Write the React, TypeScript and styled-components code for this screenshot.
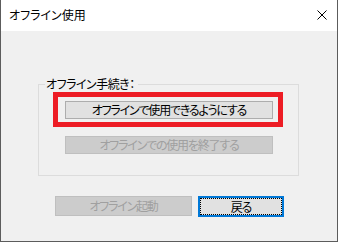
import React from 'react';
import styled, { createGlobalStyle } from 'styled-components';

const GlobalStyle = createGlobalStyle`
  html, body {
    margin: 0;
    padding: 0;
    background: #f0f0f0;
  }
  body {
    font-family: "Noto Sans CJK JP", "Noto Sans", sans-serif;
    font-size: 12px;
    font-feature-settings: "palt";
  }
`;

const Window = styled.div`
  width: 338px;
  height: 242px;
  box-sizing: border-box;
  display: flex;
  flex-direction: column;
  background: #f0f0f0;
  border: 1px solid #5c5c5c;
  border-top: none;
`;

const TitleBar = styled.div`
  height: 31px;
  flex: none;
  display: flex;
  align-items: center;
  justify-content: space-between;
  padding: 0 10px 0 8px;
  background: #ffffff;
  color: #000000;
  font-size: 12px;
  line-height: 14px;
`;

const Title = styled.span`
  margin-top: -2px;
`;

const CloseIcon = styled.svg`
  display: block;
  margin-top: -2px;
`;

const Body = styled.div`
  display: flex;
  flex-direction: column;
  align-items: flex-start;
`;

const GroupBox = styled.div`
  margin: 53px 0 0 37px;
  width: 261px;
  height: 92px;
  box-sizing: border-box;
  border: 1px solid #dcdcdc;
  display: flex;
  flex-direction: column;
  align-items: flex-start;
`;

const Legend = styled.span`
  margin: -8px 0 0 6px;
  padding: 0 3px 0 1px;
  height: 14px;
  line-height: 14px;
  letter-spacing: -0.5px;
  background: #f0f0f0;
  color: #000000;
`;

const Marked = styled.div`
  position: relative;
  margin: 10px 0 0 26px;
`;

const RedMark = styled.div`
  position: absolute;
  left: -12px;
  top: -9px;
  width: 230px;
  height: 35px;
  box-sizing: border-box;
  border: 5px solid #ed1c24;
  pointer-events: none;
`;

const Button = styled.button<{ $w: number; $h?: number; $disabled?: boolean }>`
  width: ${({ $w }) => $w}px;
  height: ${({ $h = 18 }) => $h}px;
  box-sizing: border-box;
  margin: 0;
  padding: 0;
  display: flex;
  align-items: center;
  justify-content: center;
  font-family: inherit;
  font-size: 12px;
  line-height: 14px;
  letter-spacing: -1.2px;
  font-feature-settings: "palt";
  background: ${({ $disabled }) => ($disabled ? '#cccccc' : '#e1e1e1')};
  border: 1px solid ${({ $disabled }) => ($disabled ? '#bfbfbf' : '#adadad')};
  color: ${({ $disabled }) => ($disabled ? '#a0a0a0' : '#000000')};
`;

const SecondButton = styled(Button)`
  margin: 17px 0 0 26px;
`;

const FocusButton = styled(Button)`
  border: 2px solid #0078d7;
  padding: 0;
`;

const FocusRing = styled.span`
  flex: 1;
  align-self: stretch;
  display: flex;
  align-items: center;
  justify-content: center;
  border: 1px dotted #000000;
`;

const Footer = styled.div`
  display: flex;
  gap: 6px;
  margin: 20px 0 0 54px;
`;

export default function App() {
  return (
    <>
      <GlobalStyle />
      <Window>
        <TitleBar>
          <Title>オフライン使用</Title>
          <CloseIcon width="10" height="10" viewBox="0 0 10 10">
            <path d="M0.5 0.5 L9.5 9.5 M9.5 0.5 L0.5 9.5" stroke="#000" strokeWidth="1" fill="none" />
          </CloseIcon>
        </TitleBar>
        <Body>
          <GroupBox>
            <Legend>オフライン手続き：</Legend>
            <Marked>
              <Button $w={208}>オフラインで使用できるようにする</Button>
              <RedMark />
            </Marked>
            <SecondButton $w={208} $disabled>
              オフラインでの使用を終了する
            </SecondButton>
          </GroupBox>
          <Footer>
            <Button $w={137} $h={20} $disabled>
              オフライン起動
            </Button>
            <FocusButton $w={86} $h={21}>
              <FocusRing>戻る</FocusRing>
            </FocusButton>
          </Footer>
        </Body>
      </Window>
    </>
  );
}
